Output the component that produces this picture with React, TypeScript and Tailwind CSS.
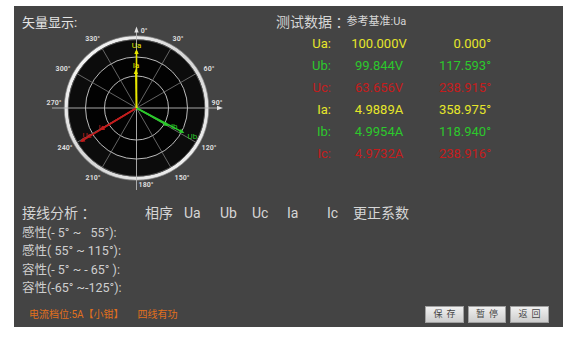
import React from "react";

const YEL = "#e6e62a";
const GRN = "#2cc82c";
const RED = "#c41c1c";

function Polar() {
  const cx = 91.5;
  const cy = 83;
  const rad = (d: number) => (d * Math.PI) / 180;
  const pt = (d: number, L: number): [number, number] => [
    cx + Math.sin(rad(d)) * L,
    cy - Math.cos(rad(d)) * L,
  ];
  const spokes = [30, 60, 120, 150, 210, 240, 300, 330];
  const head = (d: number, L: number, color: string) => {
    const [tx, ty] = pt(d, L);
    const [bx, by] = pt(d, L - 5);
    const px = Math.cos(rad(d)) * 2.2;
    const py = Math.sin(rad(d)) * 2.2;
    return (
      <polygon
        points={`${tx},${ty} ${bx + px},${by + py} ${bx - px},${by - py}`}
        fill={color}
      />
    );
  };
  const vec = (d: number, L: number, color: string) => {
    const [x, y] = pt(d, L - 2);
    return (
      <g>
        <line x1={cx} y1={cy} x2={x} y2={y} stroke={color} strokeWidth={1.6} />
        {head(d, L, color)}
      </g>
    );
  };
  const labels: [string, number, number][] = [
    ["330°", 47.7, 14.3],
    ["30°", 133, 14.3],
    ["300°", 18, 44],
    ["60°", 164, 44],
    ["270°", 9, 78],
    ["90°", 172, 78],
    ["240°", 20, 123],
    ["120°", 164, 123],
    ["210°", 48, 153],
    ["150°", 137, 153],
    ["180°", 101, 159.5],
    ["0°", 99, 5.5],
  ];
  const vl = (t: string, x: number, y: number, c: string) => (
    <text x={x} y={y} fill={c} fontSize={8} textAnchor="middle" dominantBaseline="central">
      {t}
    </text>
  );
  const [ubx, uby] = pt(117.6, 62);
  const [ibx, iby] = pt(118.9, 42);
  const [ucx, ucy] = pt(238.9, 60);
  const [icx, icy] = pt(238.9, 43);
  return (
    <svg width={180} height={170} viewBox="0 0 180 170" className="ml-[31px] -mt-[6px] block">
      <defs>
        <linearGradient id="ring" x1="0" y1="0" x2="1" y2="1">
          <stop offset="0" stopColor="#ffffff" />
          <stop offset="0.5" stopColor="#d4d4d4" />
          <stop offset="1" stopColor="#f6f6f6" />
        </linearGradient>
      </defs>
      <circle cx={cx} cy={cy} r={70.3} fill="#0c0c0c" stroke="url(#ring)" strokeWidth={3.6} />
      <circle cx={cx} cy={cy} r={72.3} fill="none" stroke="#8a8a8a" strokeWidth={0.7} />
      <circle cx={cx} cy={cy} r={68.3} fill="none" stroke="#666" strokeWidth={0.8} />
      <circle cx={cx} cy={cy} r={51} fill="#020202" stroke="#cfcfcf" strokeWidth={0.9} />
      <circle cx={cx} cy={cy} r={32} fill="none" stroke="#cfcfcf" strokeWidth={0.9} />
      {spokes.map((d) => {
        const [x, y] = pt(d, 68);
        return <line key={d} x1={cx} y1={cy} x2={x} y2={y} stroke="#7c7c7c" strokeWidth={0.8} />;
      })}
      <line x1={7} y1={cy} x2={174} y2={cy} stroke="#b8b8b8" strokeWidth={0.9} />
      <polygon points={`178,${cy} 172,${cy - 2.2} 172,${cy + 2.2}`} fill="#e0e0e0" />
      <line x1={cx} y1={5} x2={cx} y2={165} stroke="#b8b8b8" strokeWidth={0.9} />
      <polygon points={`${cx},1.5 ${cx - 2.2},7.5 ${cx + 2.2},7.5`} fill="#e0e0e0" />
      {labels.map(([t, x, y]) => (
        <text
          key={t}
          x={x}
          y={y}
          fill="#dcdcdc"
          fontSize={7}
          fontWeight={700}
          textAnchor="middle"
          dominantBaseline="central"
        >
          {t}
        </text>
      ))}
      {vec(238.915, 66, RED)}
      {vec(238.916, 43, RED)}
      {vec(117.593, 54, GRN)}
      {vec(118.94, 37, GRN)}
      {vec(0, 59, "#e8e800")}
      {vec(358.975, 39, "#e8e800")}
      {vl("Ua", cx, 20.5, "#e8e800")}
      {vl("Ia", cx - 0.5, 40.5, "#e8e800")}
      {vl("Ub", ubx + 1, uby - 0.5, GRN)}
      {vl("Ib", ibx + 1, iby - 1.5, GRN)}
      {vl("Uc", ucx + 2, ucy - 3, RED)}
      {vl("Ic", icx + 2, icy - 3, RED)}
    </svg>
  );
}

const rows: [string, string, string, string][] = [
  ["Ua:", "100.000V", "0.000°", YEL],
  ["Ub:", "99.844V", "117.593°", GRN],
  ["Uc:", "63.656V", "238.915°", RED],
  ["Ia:", "4.9889A", "358.975°", YEL],
  ["Ib:", "4.9954A", "118.940°", GRN],
  ["Ic:", "4.9732A", "238.916°", RED],
];

const ranges = [
  "感性(- 5° ~   55°):",
  "感性( 55° ~ 115°):",
  "容性(- 5° ~ - 65° ):",
  "容性(-65° ~-125°):",
];

function Btn({ children }: { children: React.ReactNode }) {
  return (
    <div className="h-[17px] flex items-center justify-center bg-gradient-to-b from-[#f0f0f0] to-[#cdcdcd] border border-[#a0a0a0] text-[9px] text-[#444] tracking-[4px] pl-[4px]">
      {children}
    </div>
  );
}

export default function App() {
  return (
    <div className="w-[577px] h-[338px] bg-white overflow-hidden pt-[6px] pl-[14px] font-[family-name:Roboto,'Noto_Sans_CJK_SC',sans-serif]">
      <div className="w-[549px] h-[321px] bg-[#444444] flex flex-col">
        <div className="flex h-[197px]">
          <div className="w-[256px] flex flex-col">
            <div className="pl-[8px] pt-[9px] text-[13px] leading-[16px] text-[#e4e4e4]">矢量显示:</div>
            <Polar />
          </div>
          <div className="pl-[6px] pt-[5px] flex flex-col">
            <div className="h-[22px] flex items-center text-[#d6d6d6] whitespace-pre">
              <span className="text-[14px]">测试数据 ：</span>
              <span className="text-[11px] ml-[-3px]">参考基准:Ua</span>
            </div>
            {rows.map(([l, v, a, c]) => (
              <div key={l} className="h-[22px] flex items-center text-[13px]" style={{ color: c }}>
                <span className="w-[55px] text-right">{l}</span>
                <span className="w-[96px] text-center">{v}</span>
                <span className="w-[64px] text-right">{a}</span>
              </div>
            ))}
          </div>
        </div>
        <div className="h-[20px] flex items-center pl-[8px] text-[14px] text-[#d6d6d6]">
          <span className="w-[123px] whitespace-pre">接线分析 ：</span>
          <span className="w-[39px]">相序</span>
          <span className="w-[36px]">Ua</span>
          <span className="w-[32px]">Ub</span>
          <span className="w-[35px]">Uc</span>
          <span className="w-[40px]">Ia</span>
          <span className="w-[26px]">Ic</span>
          <span>更正系数</span>
        </div>
        <div className="mt-[1px] flex flex-col pl-[8px] text-[12.5px] text-[#cfcfcf]">
          {ranges.map((r) => (
            <div key={r} className="h-[18.5px] flex items-center whitespace-pre">
              {r}
            </div>
          ))}
        </div>
        <div className="mt-[8px] flex items-center h-[17px] pl-[15px] pr-[14px]">
          <span className="text-[10px] text-[#e2701c] whitespace-pre">电流档位:5A【小钳】</span>
          <span className="ml-[14px] text-[10px] text-[#e2701c]">四线有功</span>
          <div className="ml-auto flex gap-[4px]">
            <div className="w-[39px]"><Btn>保存</Btn></div>
            <div className="w-[38px]"><Btn>暂停</Btn></div>
            <div className="w-[39px]"><Btn>返回</Btn></div>
          </div>
        </div>
      </div>
    </div>
  );
}
